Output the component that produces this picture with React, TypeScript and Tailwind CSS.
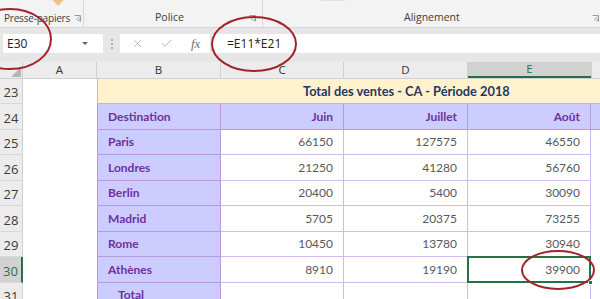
import { X, Check } from 'lucide-react';

const ui = "font-['Open_Sans',_'Noto_Sans',_sans-serif]";
const cell = "font-['Lato',_'Liberation_Sans',_sans-serif]";

const data = [
    { n: 25, city: 'Paris', v: [66150, 127575, 46550], h: 'h-[25px]' },
    { n: 26, city: 'Londres', v: [21250, 41280, 56760], h: 'h-[26px]' },
    { n: 27, city: 'Berlin', v: [20400, 5400, 30090], h: 'h-[25px]' },
    { n: 28, city: 'Madrid', v: [5705, 20375, 73255], h: 'h-[26px]' },
    { n: 29, city: 'Rome', v: [10450, 13780, 30940], h: 'h-[25px]' },
    { n: 30, city: 'Athènes', v: [8910, 19190, 39900], h: 'h-[26px]' },
];

function RowHead({ n, active }: { n: number; active?: boolean }) {
    return (
        <div
            className={`w-[23px] shrink-0 flex items-end justify-center pb-[1px] text-[13px] font-normal border-b border-[#d8d8d8] ${ui} ${
                active ? 'bg-[#d2d2d2] text-[#217346] border-r-2 border-r-[#217346]' : 'bg-[#ececec] text-[#3b3b3b] border-r border-r-[#d0d0d0]'
            }`}
        >
            {n}
        </div>
    );
}

function Launcher() {
    return (
        <svg width="7" height="7" viewBox="0 0 7 7" className="shrink-0">
            <path d="M0.5 0.5h6v6" fill="none" stroke="#9a9a9a" strokeWidth="1" />
            <path d="M2 5L5.5 1.5M3.5 5.5h2v-2" fill="none" stroke="#9a9a9a" strokeWidth="0.8" />
        </svg>
    );
}

export default function App() {
    return (
        <div className="relative w-[600px] h-[299px] overflow-hidden bg-white">
            {/* Ribbon group labels */}
            <div className={`h-[28px] flex bg-[#f3f3f3] border-b border-[#d6d6d6] text-[10.5px] text-[#404040] whitespace-nowrap ${ui}`}>
                <div className="relative w-[84px] shrink-0 border-r border-[#d8d8d8] flex items-end pb-[1px] pl-[4px] gap-[4px]">
                    <div className="absolute left-[54px] top-[-4px] w-[8px] h-[8px] rotate-45 bg-[#f0c08a]" />
                    <span className="text-[10px] tracking-[-0.2px]">Presse-papiers</span>
                    <span className="mb-[4px]"><Launcher /></span>
                </div>
                <div className="w-[179px] shrink-0 border-r border-[#d8d8d8] flex items-end pb-[1px] pl-[71px] relative">
                    <span>Police</span>
                    <span className="absolute right-[6px] bottom-[5px] flex"><Launcher /></span>
                </div>
                <div className="flex-1 flex items-end pb-[1px] pl-[141px] relative">
                    <div className="absolute left-[57px] top-[-3px] w-[26px] h-[4px] rounded-sm bg-[#e2e2e2]" />
                    <span>Alignement</span>
                    <span className="absolute right-[1px] bottom-[5px] flex"><Launcher /></span>
                </div>
            </div>

            {/* Formula bar */}
            <div className="h-[34px] bg-[#e6e6e6] flex items-start pt-[6px] pl-[3px]">
                <div className={`w-[100px] h-[19px] bg-white flex items-center justify-between pl-[4px] pr-[15px] text-[12px] text-[#222] ${ui}`}>
                    <span>E30</span>
                    <span className="w-0 h-0 border-l-[3.5px] border-r-[3.5px] border-t-[3.5px] border-l-transparent border-r-transparent border-t-[#666]" />
                </div>
                <div className="w-[17px] h-[19px] flex flex-col items-center justify-center gap-[2px]">
                    <span className="w-[2px] h-[2px] bg-[#b0b0b0]" />
                    <span className="w-[2px] h-[2px] bg-[#b0b0b0]" />
                    <span className="w-[2px] h-[2px] bg-[#b0b0b0]" />
                </div>
                <div className="w-[90px] h-[19px] bg-white flex items-center pl-[11px] gap-[16px] text-[#a8a8a8]">
                    <X size={13} strokeWidth={1.3} />
                    <Check size={13} strokeWidth={1.5} />
                    <span className="font-['Liberation_Serif',_serif] italic text-[13px] text-[#707070] ml-[2px]">fx</span>
                </div>
                <div className={`flex-1 ml-[2px] h-[19px] bg-white flex items-center pl-[15px] text-[12px] text-[#222] ${ui}`}>
                    =E11*E21
                </div>
            </div>

            {/* Column headers */}
            <div className={`h-[17px] flex bg-[#ececec] border-b border-[#d0d0d0] text-[11.5px] text-[#333] ${ui}`}>
                <div className="w-[23px] shrink-0 border-r border-[#d0d0d0] flex items-end justify-end pr-[1px] pb-[1px]">
                    <svg width="10" height="10" viewBox="0 0 10 10">
                        <path d="M10 0V10H0Z" fill="#b5b5b5" />
                    </svg>
                </div>
                <div className="w-[74px] shrink-0 border-r border-[#d0d0d0] flex items-center justify-center">A</div>
                <div className="w-[124px] shrink-0 border-r border-[#d0d0d0] flex items-center justify-center">B</div>
                <div className="w-[123px] shrink-0 border-r border-[#d0d0d0] flex items-center justify-center">C</div>
                <div className="w-[124px] shrink-0 border-r border-[#d0d0d0] flex items-center justify-center">D</div>
                <div className="w-[123px] shrink-0 bg-[#d2d2d2] border-b-2 border-[#217346] flex items-center justify-center text-[#217346]">E</div>
                <div className="flex-1 border-l border-[#d0d0d0]" />
            </div>

            {/* Row 23 - title */}
            <div className="h-[25px] flex">
                <RowHead n={23} />
                <div className="w-[74px] shrink-0" />
                <div className={`flex-1 bg-[#fff2cc] border-b border-l border-[#c8b0e0] flex items-center pl-[205px] pt-[1px] text-[12.8px] font-bold text-[#1f3864] ${cell}`}>
                    Total des ventes - CA - Période 2018
                </div>
            </div>

            {/* Row 24 - headers */}
            <div className={`h-[26px] flex text-[12px] font-bold text-[#7030a0] ${cell}`}>
                <RowHead n={24} />
                <div className="w-[74px] shrink-0" />
                <div className="w-[124px] shrink-0 bg-[#ccccff] border-l border-r border-b border-[#b79ae0] flex items-center pl-[10px]">Destination</div>
                <div className="w-[123px] shrink-0 bg-[#ccccff] border-r border-b border-[#b79ae0] flex items-center justify-end pr-[10px]">Juin</div>
                <div className="w-[124px] shrink-0 bg-[#ccccff] border-r border-b border-[#b79ae0] flex items-center justify-end pr-[10px]">Juillet</div>
                <div className="w-[123px] shrink-0 bg-[#ccccff] border-r border-b border-[#b79ae0] flex items-center justify-end pr-[10px]">Août</div>
                <div className="flex-1 bg-[#ccccff] border-b border-[#b79ae0]" />
            </div>

            {data.map((r) => (
                <div key={r.n} className={`${r.h} flex ${cell}`}>
                    <RowHead n={r.n} active={r.n === 30} />
                    <div className="w-[74px] shrink-0" />
                    <div className="w-[124px] shrink-0 bg-[#ccccff] border-l border-r border-b border-[#b79ae0] flex items-center pl-[10px] text-[12px] font-bold text-[#7030a0]">
                        {r.city}
                    </div>
                    {r.v.map((v, i) => (
                        <div
                            key={i}
                            className={`${i === 1 ? 'w-[124px]' : 'w-[123px]'} shrink-0 relative border-r border-b border-[#d4b8ee] flex items-center justify-end pr-[10px] text-[12px] text-[#595959]`}
                        >
                            {v}
                            {r.n === 30 && i === 2 && (
                                <div className="absolute -left-px -top-px -right-px -bottom-px border-2 border-[#217346]">
                                    <span className="absolute -right-[4px] -bottom-[4px] w-[5px] h-[5px] bg-[#217346] border border-white" />
                                </div>
                            )}
                        </div>
                    ))}
                    <div className="flex-1" />
                </div>
            ))}

            {/* Row 31 */}
            <div className={`h-[25px] flex ${cell}`}>
                <RowHead n={31} />
                <div className="w-[74px] shrink-0" />
                <div className="w-[124px] shrink-0 bg-[#ccccff] border-l border-r border-[#b79ae0] flex items-start pt-[3px] pl-[20px] text-[12px] font-bold text-[#7030a0]">
                    Total
                </div>
                <div className="w-[123px] shrink-0 border-r border-[#d4b8ee]" />
                <div className="w-[124px] shrink-0 border-r border-[#d4b8ee]" />
                <div className="w-[123px] shrink-0 border-r border-[#d4b8ee]" />
            </div>

            {/* Red annotation circles */}
            <svg className="absolute inset-0 pointer-events-none" width="600" height="299">
                <ellipse cx="10" cy="39" rx="41" ry="30" fill="none" stroke="#a3232a" strokeWidth="2" />
                <ellipse cx="254" cy="44" rx="42" ry="27" fill="none" stroke="#a3232a" strokeWidth="2" />
                <ellipse cx="558" cy="270" rx="36" ry="19" fill="none" stroke="#a3232a" strokeWidth="2" />
            </svg>
        </div>
    );
}
